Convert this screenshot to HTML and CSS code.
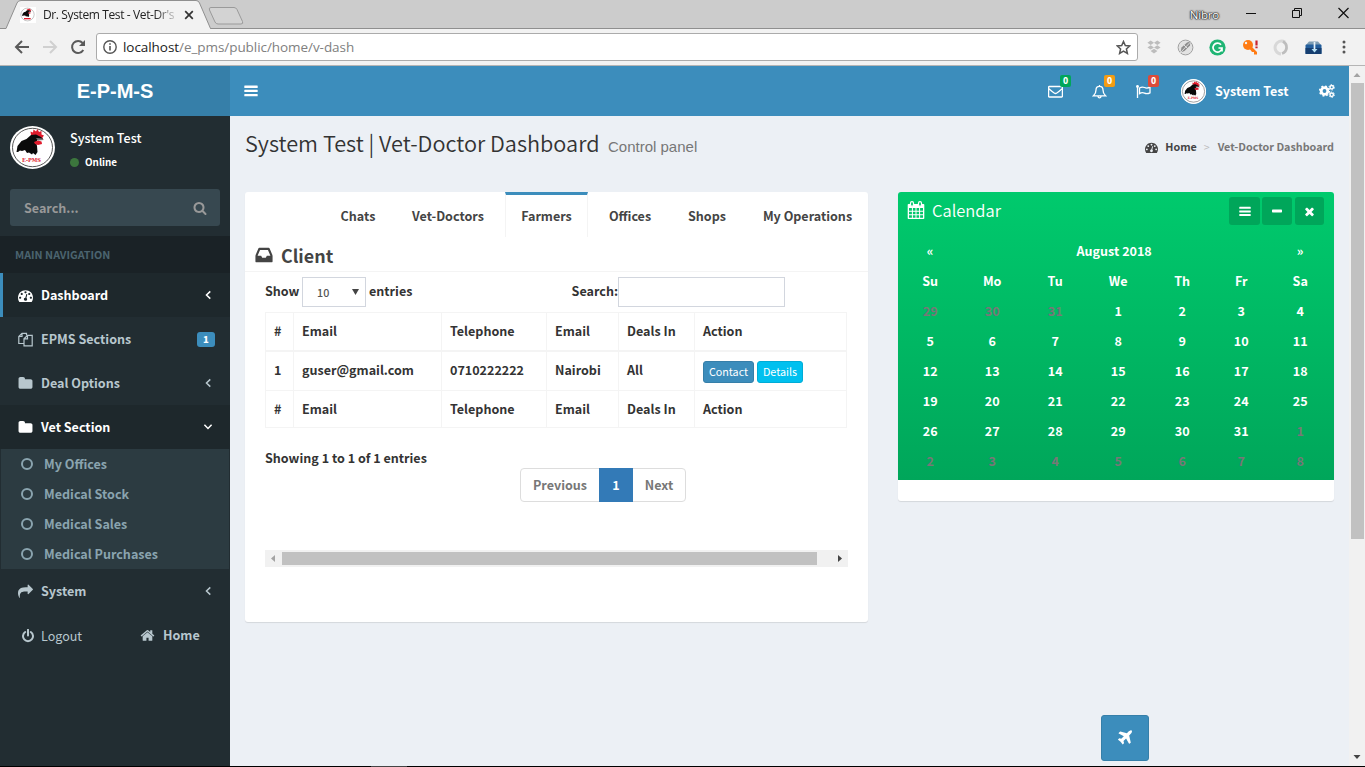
FILE: index.html
```html
<!DOCTYPE html>
<html lang="en">
<head>
<meta charset="utf-8">
<title>Dr. System Test - Vet-Dr's Dashboard</title>
<link rel="stylesheet" href="styles.css">
</head>
<body>
<svg class="defs" aria-hidden="true">
  <symbol id="rooster" viewBox="0 0 45 43">
    <ellipse cx="22.500" cy="21.500" rx="22.500" ry="21.500" fill="#fff"/>
    <ellipse cx="22.500" cy="21.500" rx="20" ry="19.200" fill="none" stroke="#444" stroke-width=".9"/>
    <path d="M21 9l-.5-3.500 2.500 1 .5-3 2.500 2 1.500-2.500 1.500 3 2.500-1 0 3.500 2.500 1-1.500 2 .5 2.500-3-1-3-2z" fill="#e01b2c"/>
    <path d="M6.500 26l1-6 4-5 5-2 4.500-4 5-.5 5 2.500 2 2-5 .5-2 2.500 1 4 .5 6-2 3-2.500-2-1 1.500-3-2-2 .5-2-3-3 1-2-.5-2 1.500z" fill="#0a0a0a"/>
    <path d="M24 16l4-1.500 3.500 1 .5 2.500-4 1-3-1z" fill="#e01b2c"/>
    <path d="M26 12l6 .5 2 1.500-6 .5z" fill="#777"/>
  </symbol>
  <symbol id="dash" viewBox="0 0 1792 1792"><path d="M384 1152q0-53-37.500-90.500t-90.500-37.500-90.500 37.500-37.500 90.500 37.500 90.500 90.500 37.500 90.500-37.500 37.500-90.500zm192-448q0-53-37.500-90.500t-90.500-37.500-90.500 37.500-37.500 90.500 37.500 90.500 90.500 37.500 90.500-37.500 37.500-90.500zm428 481l101-382q6-26-7.500-48.500t-38.500-29.500-48 6.500-30 39.500l-101 382q-60 5-107 43.500t-63 98.500q-20 77 20 146t117 89 146-20 89-117q16-60-6-117t-72-91zm660-33q0-53-37.500-90.500t-90.500-37.500-90.500 37.500-37.500 90.500 37.500 90.500 90.500 37.500 90.500-37.500 37.500-90.500zm-640-640q0-53-37.500-90.500t-90.500-37.500-90.500 37.500-37.500 90.500 37.500 90.500 90.500 37.500 90.500-37.500 37.500-90.500zm448 192q0-53-37.500-90.500t-90.500-37.500-90.500 37.500-37.500 90.500 37.500 90.500 90.500 37.500 90.500-37.500 37.500-90.500zm320 448q0 261-141 483-19 29-54 29h-1402q-35 0-54-29-141-221-141-483 0-182 71-348t191-286 286-191 348-71 348 71 286 191 191 286 71 348z"/></symbol>
  <symbol id="folder" viewBox="0 0 1792 1792"><path d="M1728 608v704q0 92-66 158t-158 66h-1216q-92 0-158-66t-66-158v-960q0-92 66-158t158-66h320q92 0 158 66t66 158v32h672q92 0 158 66t66 158z"/></symbol>
  <symbol id="share" viewBox="0 0 1792 1792"><path d="M1792 640q0 26-19 45l-512 512q-19 19-45 19t-45-19-19-45v-256h-224q-98 0-175.500 6t-154 21.500-133 42.500-105.500 69.500-80 101-48.500 138.500-17.500 181q0 55 5 123 0 6 2.500 23.500t2.500 26.500q0 15-8.500 25t-23.500 10q-16 0-28-17-7-9-13-22t-13.500-30-10.500-24q-127-285-127-451 0-199 53-333 162-403 875-403h224v-256q0-26 19-45t45-19 45 19l512 512q19 19 19 45z"/></symbol>
  <symbol id="home" viewBox="0 0 1792 1792"><path d="M1472 992v480q0 26-19 45t-45 19h-384v-384h-256v384h-384q-26 0-45-19t-19-45v-480q0-1 .5-3t.5-3l575-474 575 474q1 2 1 6zm223-69l-62 74q-8 9-21 11h-3q-13 0-21-7l-692-577-692 577q-12 8-24 7-13-2-21-11l-62-74q-8-10-7-23.500t11-21.500l719-599q32-26 76-26t76 26l244 204v-195q0-14 9-23t23-9h192q14 0 23 9t9 23v408l219 182q10 8 11 21.500t-7 23.500z"/></symbol>
  <symbol id="search" viewBox="0 0 1792 1792"><path d="M1216 832q0-185-131.500-316.500t-316.500-131.500-316.500 131.500-131.500 316.500 131.500 316.500 316.500 131.500 316.500-131.500 131.500-316.500zm512 832q0 52-38 90t-90 38q-54 0-90-38l-343-342q-179 124-399 124-143 0-273.500-55.500t-225-150-150-225-55.500-273.500 55.500-273.500 150-225 225-150 273.500-55.500 273.500 55.500 225 150 150 225 55.500 273.500q0 220-124 399l343 343q37 37 37 90z"/></symbol>
  <symbol id="times" viewBox="0 0 1792 1792"><path d="M1490 1322q0 40-28 68l-136 136q-28 28-68 28t-68-28l-294-294-294 294q-28 28-68 28t-68-28l-136-136q-28-28-28-68t28-68l294-294-294-294q-28-28-28-68t28-68l136-136q28-28 68-28t68 28l294 294 294-294q28-28 68-28t68 28l136 136q28 28 28 68t-28 68l-294 294 294 294q28 28 28 68z"/></symbol>
  <symbol id="plane" viewBox="0 0 1792 1792"><path d="M1568 160q44 52 12 148t-108 172l-161 161 160 696q5 19-12 33l-128 96q-7 6-19 6-4 0-7-1-15-3-21-16l-279-508-259 259 53 194q5 17-8 31l-96 96q-9 9-23 9h-2q-15-2-24-13l-189-252-252-189q-11-7-13-23-1-13 9-25l96-97q9-9 23-9 6 0 8 1l194 53 259-259-508-279q-14-8-17-24-2-16 9-27l128-128q14-13 30-8l665 159 160-160q76-76 172-108t148 12z"/></symbol>
  <symbol id="inbox" viewBox="0 0 1792 1792"><path d="M1151 960h316q-1-3-2.500-8t-2.500-8l-212-496h-708l-212 496q-1 2-2.500 8t-2.500 8h316l95 192h320zm513 30v482q0 26-19 45t-45 19h-1408q-26 0-45-19t-19-45v-482q0-62 25-123l238-552q10-25 36.500-42t52.500-17h832q26 0 52.500 17t36.500 42l238 552q25 61 25 123z"/></symbol>
  <symbol id="bars" viewBox="0 0 14 12"><path d="M.8.500h12.400q.5 0 .5.500v1.400q0 .5-.5.500H.8q-.5 0-.5-.5V1q0-.5.5-.5zM.8 4.700h12.400q.5 0 .5.500v1.400q0 .5-.5.500H.8q-.5 0-.5-.5V5.200q0-.5.5-.5zM.8 8.900h12.400q.5 0 .5.500v1.400q0 .5-.5.500H.8q-.5 0-.5-.5V9.400q0-.5.500-.5z"/></symbol>
  <symbol id="left" viewBox="0 0 8 10"><path d="M6.300 1.400L2.500 5l3.800 3.600" fill="none" stroke="currentColor" stroke-width="1.500"/></symbol>
</svg>

<div class="browser">
  <div class="tabstrip">
    <svg class="tab-shape" width="250" height="29" viewBox="0 0 250 29">
      <path d="M0 28.500H6L17 3q1-2.500 4-2.500H196q2.500 0 3.500 2.500L210.500 28.500V29H0z" fill="#f2f2f2"/>
      <path d="M0 28.500H6L17 3q1-2.500 4-2.500H196q2.500 0 3.500 2.500L210.500 28.500H250" fill="none" stroke="#8f8f8f"/>
      <path d="M211 7.500H234q2 0 3 2l5.500 12q1 2.500-1.500 2.500H218q-2 0-3-2L209.500 10q-1-2.500 1.500-2.500z" fill="#d3d3d3" stroke="#9a9a9a"/>
    </svg>
    <div class="tab">
      <span class="favicon"><svg width="15" height="15" viewBox="0 0 45 45"><use href="#rooster" width="45" height="45"/><path d="M12 35h20" stroke="#e01b2c" stroke-width="4"/></svg></span>
      <span class="tab-title">Dr. System Test - Vet-Dr's</span>
      <svg class="tab-close" width="10" height="10" viewBox="0 0 10 10"><path d="M1.200 1.200l7.600 7.600M8.800 1.200L1.200 8.800" stroke="#333" stroke-width="1.700"/></svg>
    </div>
    <div class="window-buttons">
      <span class="user">Nibro</span>
      <svg width="10" height="12" viewBox="0 0 10 12"><path d="M0 6.500h10" stroke="#111"/></svg>
      <svg width="10" height="12" viewBox="0 0 10 12"><path d="M.5 3.500h7v7h-7zM2.500 3.500v-2h7v7h-2" fill="none" stroke="#111"/></svg>
      <svg width="11" height="12" viewBox="0 0 11 12"><path d="M.5 1l10 10M10.500 1l-10 10" stroke="#111" stroke-width="1.200"/></svg>
    </div>
  </div>
  <div class="toolbar">
    <div class="nav-buttons">
      <svg width="16" height="16" viewBox="0 0 16 16"><path d="M15 8H2.500M8 2L2 8l6 6" fill="none" stroke="#5a5a5a" stroke-width="2"/></svg>
      <svg width="16" height="16" viewBox="0 0 16 16"><path d="M1 8h12.500M8 2l6 6-6 6" fill="none" stroke="#d0d0d0" stroke-width="2"/></svg>
      <svg width="16" height="16" viewBox="0 0 16 16"><path d="M13.300 11A6 6 0 1 1 12.600 4" fill="none" stroke="#5a5a5a" stroke-width="2"/><path d="M15 1v6H9z" fill="#5a5a5a"/></svg>
    </div>
    <div class="omnibox">
      <svg width="14" height="14" viewBox="0 0 14 14"><circle cx="7" cy="7" r="6.200" fill="none" stroke="#555" stroke-width="1.400"/><path d="M7 6v4.500M7 3.300v1.500" stroke="#555" stroke-width="1.600"/></svg>
      <span class="url"><b>localhost</b>/e_pms/public/home/v-dash</span>
      <svg class="star" width="15" height="15" viewBox="0 0 15 15"><path d="M7.500 1.500l1.800 4.100 4.400.4-3.300 3 1 4.400-3.900-2.300-3.900 2.300 1-4.400-3.300-3 4.400-.4z" fill="none" stroke="#555" stroke-width="1.500"/></svg>
    </div>
    <div class="extensions">
      <svg width="14" height="14" viewBox="0 0 14 14" fill="#bdbdbd"><path d="M3.700.5L7 2.700 3.700 4.900.4 2.700zM10.300.5l3.300 2.200-3.300 2.200L7 2.700zM3.700 5.200L7 7.400 3.700 9.600.4 7.400zM10.300 5.200l3.300 2.200-3.300 2.200L7 7.400zM7 8.800l3.400 2.200L7 13.500 3.600 11z"/></svg>
      <svg width="17" height="17" viewBox="0 0 17 17"><circle cx="8.500" cy="8.500" r="7.400" fill="#e2e2e2" stroke="#a2a2a2"/><path d="M3.500 13.500l1-5L10 3.500l3.500-1-.5 4L7.500 12z" fill="#8d8d8d"/><path d="M3 14L13.500 3M7 6l4 4" stroke="#ddd"/></svg>
      <svg width="17" height="17" viewBox="0 0 17 17"><circle cx="8.500" cy="8.500" r="8.100" fill="#1fb574"/><path d="M12 5.700A4.500 4.500 0 1 0 13 9H9.500M13 9v3.500" fill="none" stroke="#fff" stroke-width="1.700"/></svg>
      <svg width="17" height="17" viewBox="0 0 17 17"><circle cx="7" cy="6" r="5" fill="#ff7b13"/><circle cx="5" cy="4" r="1.200" fill="#f2f2f2"/><path d="M9 6l7 7v2.500h-3V13h-2l-3-4z" fill="#ff7b13"/><path d="M15.500 1.500v5M15.500 7.500v1.800" stroke="#c8252d" stroke-width="2.200"/></svg>
      <svg width="17" height="17" viewBox="0 0 17 17" fill="none"><path d="M8 15a6.500 6.500 0 1 1 4-12" stroke="#d8d8d8" stroke-width="3"/><path d="M10 2.500a6.500 6.500 0 0 1-1 12" stroke="#bdbdbd" stroke-width="2.800"/></svg>
      <svg width="17" height="17" viewBox="0 0 17 17"><path d="M1 6L4 2.500h9L16 6z" fill="#7e9db3"/><rect x=".5" y="5.500" width="16" height="9.500" rx="1" fill="#235e9c"/><rect x=".5" y="9" width="16" height="6" fill="#153e70"/><path d="M9.500 3v8" stroke="#e8f4fa" stroke-width="1.700"/><path d="M6.500 10h6l-3 3.500z" fill="#b4e0f5"/></svg>
      <svg width="4" height="14" viewBox="0 0 4 14" fill="#555"><circle cx="2" cy="2" r="1.500"/><circle cx="2" cy="7" r="1.500"/><circle cx="2" cy="12" r="1.500"/></svg>
    </div>
  </div>
</div>

<div class="viewport">
  <div class="page">
    <aside class="sidebar">
      <a class="logo">E-P-M-S</a>
      <div class="user-panel">
        <svg width="45" height="43" viewBox="0 0 45 43"><use href="#rooster" width="45" height="43"/><text class="brand" x="21.500" y="35.800" textLength="19" lengthAdjust="spacingAndGlyphs">E-PMS</text></svg>
        <div class="user-info"><p class="who">System Test</p><p class="status"><i></i>Online</p></div>
      </div>
      <div class="side-search"><span>Search...</span><svg width="14" height="14"><use href="#search"/></svg></div>
      <div class="nav-title">MAIN NAVIGATION</div>
      <nav>
        <a class="item current"><svg class="ic" width="15" height="15"><use href="#dash"/></svg><span>Dashboard</span><svg class="arrow" width="8" height="10"><use href="#left"/></svg></a>
        <a class="item"><svg class="ic" width="15" height="15" viewBox="0 0 15 15"><path d="M5.500 11.500H.8V4.500L4 1.300h4.500v2M4 1.300v3.200H.8M9.500 3.300h4.700v10.500H6V6.800zM9.500 3.300v3.500H6" fill="none" stroke="currentColor" stroke-width="1.200"/></svg><span>EPMS Sections</span><b class="count">1</b></a>
        <a class="item"><svg class="ic" width="15" height="15"><use href="#folder"/></svg><span>Deal Options</span><svg class="arrow" width="8" height="10"><use href="#left"/></svg></a>
        <a class="item open"><svg class="ic" width="15" height="15"><use href="#folder"/></svg><span>Vet Section</span><svg class="arrow down" width="8" height="10"><use href="#left"/></svg></a>
        <div class="submenu">
          <a><i></i>My Offices</a>
          <a><i></i>Medical Stock</a>
          <a><i></i>Medical Sales</a>
          <a><i></i>Medical Purchases</a>
        </div>
        <a class="item"><svg class="ic" width="15" height="15"><use href="#share"/></svg><span>System</span><svg class="arrow" width="8" height="10"><use href="#left"/></svg></a>
      </nav>
      <div class="side-footer">
        <svg width="14" height="14" viewBox="0 0 14 14"><path d="M4.200 3a5 5 0 1 0 5.600 0M7 .8v5.700" fill="none" stroke="currentColor" stroke-width="2" stroke-linecap="round"/></svg>
        <span class="logout">Logout</span>
        <svg class="house" width="15" height="15"><use href="#home"/></svg>
        <b>Home</b>
      </div>
    </aside>

    <div class="content">
      <header class="navbar">
        <svg class="toggle" width="14" height="12"><use href="#bars"/></svg>
        <div class="alerts">
          <span><svg width="15" height="15" viewBox="0 0 15 15"><path d="M1.200 2.500h12.600q.6 0 .6.600v9.300q0 .6-.6.600H1.200q-.6 0-.6-.6V3.100q0-.6.6-.6zM.6 4.500Q4.500 8 6.500 9.200q1 .6 2 0 2-1.200 5.900-4.700" fill="none" stroke="#fff" stroke-width="1.300"/></svg><b class="green">0</b></span>
          <span><svg width="15" height="15" viewBox="0 0 15 15"><path d="M7.500 1v1.200M1.500 11.800Q4 9.500 4 6q0-3.600 3.500-3.600T11 6q0 3.500 2.500 5.800zM6 12.300q.2 1.500 1.500 1.500T9 12.300" fill="none" stroke="#fff" stroke-width="1.300"/></svg><b class="orange">0</b></span>
          <span><svg width="15" height="15" viewBox="0 0 15 15"><path d="M1.500 2v12M3.500 4Q6 2.500 8.500 3.500q2.500 1.200 5.500-.3v5.600q-3 1.500-5.500.3-2.500-1-5 .5z" fill="none" stroke="#fff" stroke-width="1.300"/><circle cx="1.500" cy="2.500" r="1.400" fill="#fff"/></svg><b class="red">0</b></span>
        </div>
        <svg class="avatar" width="25" height="25" viewBox="0 0 45 45"><circle cx="22.500" cy="22.500" r="22.500" fill="#fff"/><use href="#rooster" width="45" height="45"/><text class="brand" x="21.500" y="36.800" textLength="19" lengthAdjust="spacingAndGlyphs">E-PMS</text></svg>
        <b class="name">System Test</b>
        <svg class="cogs" width="16" height="14" viewBox="0 0 16 14" fill="none" stroke="#fff"><circle cx="5.500" cy="7" r="3.300" stroke-width="2.800"/><circle cx="5.500" cy="7" r="4.900" stroke-width="1.500" stroke-dasharray="1.900 1.950"/><circle cx="12.700" cy="3.300" r="1.700" stroke-width="1.500"/><circle cx="12.700" cy="3.300" r="2.700" stroke-width="1" stroke-dasharray="1.400 1.420"/><circle cx="12.700" cy="10.700" r="1.700" stroke-width="1.500"/><circle cx="12.700" cy="10.700" r="2.700" stroke-width="1" stroke-dasharray="1.400 1.420"/></svg>
      </header>

      <section class="heading">
        <h1>System Test | Vet-Doctor Dashboard</h1><small>Control panel</small>
        <div class="crumbs"><svg width="13" height="13"><use href="#dash"/></svg><span class="here">Home</span><i>&gt;</i><span>Vet-Doctor Dashboard</span></div>
      </section>

      <section class="boards">
        <div class="card">
          <div class="tabs"><a>Chats</a><a>Vet-Doctors</a><a class="active">Farmers</a><a>Offices</a><a>Shops</a><a>My Operations</a></div>
          <div class="card-title"><svg width="20" height="20"><use href="#inbox"/></svg><h2>Client</h2></div>
          <div class="card-body">
            <div class="filters">
              <span>Show</span><div class="select">10<svg width="7" height="6" viewBox="0 0 7 6"><path d="M0 0h7L3.500 6z" fill="#444"/></svg></div><span>entries</span>
              <label>Search:</label><input type="text" aria-label="Search">
            </div>
            <table>
              <colgroup><col class="c1"><col class="c2"><col class="c3"><col class="c4"><col class="c5"><col class="c6"></colgroup>
              <thead><tr><th>#</th><th>Email</th><th>Telephone</th><th>Email</th><th>Deals In</th><th>Action</th></tr></thead>
              <tbody><tr><td>1</td><td>guser@gmail.com</td><td>0710222222</td><td>Nairobi</td><td>All</td><td class="act"><div class="actions"><a class="contact">Contact</a><a class="details">Details</a></div></td></tr></tbody>
              <tfoot><tr><th>#</th><th>Email</th><th>Telephone</th><th>Email</th><th>Deals In</th><th>Action</th></tr></tfoot>
            </table>
            <div class="summary">Showing 1 to 1 of 1 entries</div>
            <div class="pager"><a>Previous</a><a class="on">1</a><a>Next</a></div>
            <div class="hscroll"><svg width="17" height="17" viewBox="0 0 17 17"><path d="M10 5v7L6 8.500z" fill="#a3a3a3"/></svg><i></i><svg width="17" height="17" viewBox="0 0 17 17"><path d="M7 5v7l4-3.500z" fill="#444"/></svg></div>
          </div>
        </div>

        <div class="calendar">
          <div class="cal-green">
            <div class="cal-head">
              <svg width="18" height="19" viewBox="0 0 18 19"><path d="M1.500 3h15q.8 0 .8.800v13.500q0 .8-.8.800h-15q-.8 0-.8-.8V3.800q0-.8.8-.8zM2 7v2.800h2.900V7zm3.900 0v2.800h2.600V7zm3.600 0v2.800h2.600V7zm3.600 0v2.800H16V7zM2 10.700v2.600h2.900v-2.600zm3.900 0v2.600h2.600v-2.600zm3.600 0v2.600h2.600v-2.600zm3.600 0v2.600H16v-2.600zM2 14.200v2.600h2.900v-2.600zm3.900 0v2.600h2.600v-2.600zm3.600 0v2.600h2.600v-2.600zm3.600 0v2.600H16v-2.600z" fill="#fff" fill-rule="evenodd"/><rect x="3.500" y=".7" width="3" height="4.500" rx="1.500" fill="#00ca6d" stroke="#fff" stroke-width="1.200"/><rect x="11.500" y=".7" width="3" height="4.500" rx="1.500" fill="#00ca6d" stroke="#fff" stroke-width="1.200"/></svg>
              <h3>Calendar</h3>
              <a class="b1"><svg width="12" height="11"><use href="#bars"/></svg></a>
              <a class="b2"><svg width="10" height="4" viewBox="0 0 10 4"><rect width="10" height="3" y=".5" rx=".7"/></svg></a>
              <a class="b3"><svg width="13" height="13"><use href="#times"/></svg></a>
            </div>
            <div class="cal-grid">
              <span>«</span><span class="month">August 2018</span><span>»</span>
              <span>Su</span><span>Mo</span><span>Tu</span><span>We</span><span>Th</span><span>Fr</span><span>Sa</span>
              <span class="off">29</span><span class="off">30</span><span class="off">31</span><span>1</span><span>2</span><span>3</span><span>4</span>
              <span>5</span><span>6</span><span>7</span><span>8</span><span>9</span><span>10</span><span>11</span>
              <span>12</span><span>13</span><span>14</span><span>15</span><span>16</span><span>17</span><span>18</span>
              <span>19</span><span>20</span><span>21</span><span>22</span><span>23</span><span>24</span><span>25</span>
              <span>26</span><span>27</span><span>28</span><span>29</span><span>30</span><span>31</span><span class="off">1</span>
              <span class="off">2</span><span class="off">3</span><span class="off">4</span><span class="off">5</span><span class="off">6</span><span class="off">7</span><span class="off">8</span>
            </div>
          </div>
        </div>
      </section>
      <a class="fly"><svg width="18" height="18"><use href="#plane"/></svg></a>
    </div>
  </div>
  <div class="vscroll"><svg width="16" height="17" viewBox="0 0 16 17"><path d="M4.500 11h7L8 7z" fill="#a3a3a3"/></svg><i></i><svg class="end" width="16" height="17" viewBox="0 0 16 17"><path d="M4.500 6h7L8 10z" fill="#444"/></svg></div>
</div>
<div class="taskbar"><i></i></div>
</body>
</html>
```

FILE: styles.css
```css
* { box-sizing: border-box; }
body {
  margin: 0; width: 1365px; height: 767px; overflow: hidden;
  display: flex; flex-direction: column;
  font: 600 12.55px/20px "Noto Sans CJK SC", "Noto Sans", sans-serif; color: #333;
}
p, h1, h2, h3 { margin: 0; }
svg { display: block; flex: none; }
svg:not([fill]) { fill: currentColor; }
i { font-style: normal; }
.defs { position: absolute; width: 0; height: 0; }
.brand { font: 700 5.5px "DejaVu Serif", serif; fill: #e01b2c; text-anchor: middle; }

/* Browser frame */
.browser { height: 66px; flex: none; background: #f2f2f2; border-bottom: 1px solid #b5b5b5; font-family: "Open Sans", sans-serif; font-weight: 400; }
.tabstrip { height: 29px; background: linear-gradient(#ccc 28px, #8f8f8f 28px); display: flex; position: relative; }
.tab-shape { position: absolute; left: 0; top: 0; }
.tab { position: relative; width: 250px; display: flex; align-items: center; padding: 1px 0 0 20px; height: 29px; }
.favicon { width: 16px; height: 16px; background: #fff; }
.tab-title { margin-left: 7px; width: 133px; white-space: nowrap; overflow: hidden; color: #222; font-size: 12px; letter-spacing: -.38px; -webkit-mask-image: linear-gradient(90deg, #000 112px, transparent 137px); }
.tab-close { margin-left: 8px; }
.window-buttons { margin-left: auto; display: flex; align-items: center; padding: 0 16px 3px 0; }
.window-buttons svg:nth-of-type(1) { margin-left: 27px; }
.window-buttons svg:nth-of-type(2) { margin-left: 36px; }
.window-buttons svg:nth-of-type(3) { margin-left: 36px; }
.user { font-size: 11.5px; color: #fff; letter-spacing: -.2px; text-shadow: 0 0 1px #111, 0 0 1px #222, 0 0 2px #222, 0 0 2px #444; padding-top: 3px; }
.toolbar { height: 36px; display: flex; align-items: center; padding-left: 14px; }
.nav-buttons { display: flex; gap: 12px; width: 82px; }
.omnibox { width: 1042px; height: 28px; border: 1px solid #ababab; border-radius: 3px; background: #fff; display: flex; align-items: center; padding: 0 6px; }
.url { margin-left: 6px; font-size: 13.5px; letter-spacing: -.06px; color: #808080; white-space: nowrap; }
.url b { color: #222; font-weight: 400; }
.star { margin-left: auto; }
.extensions { display: flex; align-items: center; gap: 15px; padding-left: 9px; }
.extensions svg:nth-child(2) { margin-left: 1px; }
.extensions svg:last-child { margin-left: 5px; }

/* Application shell */
.viewport { flex: 1; display: flex; min-height: 0; }
.page { flex: 1; display: flex; background: #ecf0f5; }
.sidebar { width: 230px; background: #222d32; color: #b8c7ce; }
.logo { display: block; height: 50px; background: #367fa9; color: #fff; text-align: center; font: bold 20px/50px "Liberation Sans", Arial, sans-serif; }
.user-panel { height: 63px; padding: 10px; display: flex; color: #fff; }
.user-info { padding: 2px 0 0 15px; }
.who { font-weight: 500; letter-spacing: .02px; }
.status { display: flex; align-items: center; font-size: 9.85px; line-height: 20px; margin-top: 4px; }
.status i { width: 9px; height: 9px; border-radius: 50%; background: #3c763d; margin-right: 6px; }
.side-search { margin: 10px 10px 10px; height: 37px; border-radius: 3px; background: #374850; color: #999; display: flex; align-items: center; justify-content: space-between; padding: 0 13px 0 14px; }
.nav-title { height: 37px; background: #1a2226; color: #4b646f; font-size: 10.75px; line-height: 37px; padding-left: 15px; }
.item { height: 44px; display: flex; align-items: center; padding: 0 15px 0 18px; border-left: 0; }
.item span { margin-left: 8px; }
.item .arrow { margin-left: auto; margin-right: 3px; }
.item.current, .item.open { background: #1e282c; color: #fff; }
.item.current { border-left: 3px solid #3c8dbc; padding-left: 15px; }
.arrow.down { transform: rotate(-90deg); }
.count { margin-left: auto; width: 18px; height: 15px; border-radius: 3px; background: #3c8dbc; color: #fff; font-size: 9.5px; line-height: 14px; text-align: center; }
.submenu { margin: 0 1px; background: #2c3b41; color: #8aa4af; }
.submenu a { height: 30px; display: flex; align-items: center; padding-left: 20px; }
.submenu i { width: 12px; height: 12px; border: 2px solid #8aa4af; border-radius: 50%; margin-right: 11px; }
.side-footer { height: 46px; display: flex; align-items: center; padding-left: 21px; }
.logout { margin-left: 6px; width: 99px; font-weight: 400; }
.house { margin-bottom: 1px; }
.side-footer b { margin: 0 0 2px 8px; font-weight: 600; }

.content { flex: 1; display: flex; flex-direction: column; }
.navbar { height: 50px; background: #3c8dbc; color: #fff; display: flex; align-items: center; padding: 0 14px; }
.alerts { margin-left: auto; display: flex; gap: 29px; }
.alerts span { position: relative; }
.alerts b { position: absolute; left: 12px; top: -9px; width: 11px; height: 12px; border-radius: 2px; font-size: 8.5px; line-height: 11px; text-align: center; }
.green { background: #00a65a; } .orange { background: #f39c12; } .red { background: #dd4b39; }
.avatar { margin-left: 30px; }
.name { margin-left: 9px; width: 104px; font-weight: 600; }

.heading { height: 76px; padding: 0 15px; display: flex; align-items: flex-start; }
.heading h1 { font-size: 21.7px; font-weight: 350; line-height: 30px; padding-top: 12px; width: 363px; white-space: nowrap; }
.heading small { font: 15px/30px "Liberation Sans", Arial, sans-serif; color: #777; padding-top: 16px; }
.crumbs { margin-left: auto; padding-top: 21px; display: flex; align-items: center; font-size: 10.75px; color: #777; }
.crumbs svg { color: #444; }
.crumbs .here { color: #444; margin-left: 7px; }
.crumbs i { color: #bbb; padding: 0 8px 0 7px; font-weight: 400; font-size: 10.5px; }
.boards { display: flex; gap: 30px; padding: 0 15px; align-items: flex-start; }

/* Client card */
.card { width: 623px; height: 430px; background: #fff; border-radius: 3px; box-shadow: 0 1px 1px rgba(0,0,0,.1); }
.tabs { display: grid; grid-template-columns: 66px 104px 83px 74px 70px 121px; gap: 5px; justify-content: end; height: 44px; color: #444; }
.tabs a { text-align: center; line-height: 42px; padding-top: 3px; white-space: nowrap; }
.tabs .active { border: solid #f4f4f4; border-width: 3px 1px 0; border-top-color: #3c8dbc; padding-top: 0; }
.card-title { height: 36px; border-bottom: 1px solid #f4f4f4; display: flex; align-items: center; padding: 3px 0 0 9px; color: #444; }
.card-title h2 { margin-left: 7px; font-size: 17.9px; font-weight: 600; }
.card-body { padding: 5px 20px 0; }
.filters { display: flex; height: 30px; align-items: center; margin-bottom: 5px; }
.filters span, .filters label { padding-bottom: 2px; }
.filters span:first-child { width: 37px; }
.select { width: 64px; height: 30px; border: 1px solid #d2d6de; margin-right: 3px; display: flex; align-items: center; justify-content: space-between; padding: 1px 6px 0 14px; font-size: 10.75px; color: #555; font-weight: 500; }
.select svg { margin-bottom: 2px; }
.filters label { margin-left: auto; }
.filters input { width: 167px; height: 30px; border: 1px solid #d2d6de; margin-right: 63px; padding: 0; }
table { width: 581px; table-layout: fixed; border-collapse: collapse; }
.c1 { width: 28px; } .c2 { width: 148px; } .c3 { width: 105px; } .c4 { width: 72px; } .c5 { width: 76px; } .c6 { width: 152px; }
th, td { border: 1px solid #f4f4f4; padding: 0 8px; text-align: left; font-weight: 600; height: 37px; white-space: nowrap; }
thead th { border-bottom-width: 2px; height: 38px; }
tbody td { height: 40px; padding: 8px 8px 0; vertical-align: top; }
tbody td.act { padding-top: 9px; }
.actions { display: flex; gap: 3px; }
.actions a { height: 22px; border: 1px solid #367fa9; border-radius: 3px; background: #3c8dbc; color: #fff; font-size: 10.75px; line-height: 20px; font-weight: 400; text-align: center; width: 51px; }
.actions .details { background: #00c0ef; border-color: #00acd6; width: 46px; }
.summary { margin-top: 20px; height: 20px; }
.pager { display: flex; width: 166px; height: 34px; margin-left: 255px; color: #777; border: 1px solid #ddd; border-radius: 4px; line-height: 32px; text-align: center; }
.pager a:first-child { width: 78px; }
.pager a:last-child { width: 52px; }
.pager .on { width: 34px; margin: -1px 0; line-height: 34px; background: #337ab7; color: #fff; }
.hscroll { margin-top: 48px; width: 583px; height: 17px; background: #f1f1f1; display: flex; align-items: center; }
.hscroll i { width: 535px; height: 13px; background: #c1c1c1; margin-right: 14px; }

/* Calendar */
.calendar { width: 436px; height: 309px; background: #fff; border-radius: 3px; overflow: hidden; box-shadow: 0 1px 1px rgba(0,0,0,.1); color: #fff; }
.cal-green { height: 288px; background: linear-gradient(#00ca6d, #00a65a); }
.cal-head { height: 44px; display: flex; padding: 5px 10px 0 9px; }
.cal-head > svg { margin-top: 4px; }
.cal-head h3 { margin: 3px auto 0 7px; font-size: 16.5px; font-weight: 350; line-height: 20px; }
.cal-head a { height: 28px; background: #00a65a; border-radius: 3px; display: flex; align-items: center; justify-content: center; }
.b1 { width: 31px; margin-right: 2px; } .b2 { width: 30px; margin-right: 3px; } .b3 { width: 29px; }
.cal-grid { display: grid; grid-template-columns: 62px 62px 64px 62px 66px 52px 66px; grid-auto-rows: 30px; padding-left: 1.2px; text-align: center; line-height: 29px; }
.month { grid-column: span 5; }
.cal-grid .off { color: #777; }

.fly { margin: auto 200px 5px auto; width: 48px; height: 46px; background: #3c8dbc; border: 1px solid #367fa9; border-radius: 3px; color: #fff; display: flex; align-items: center; justify-content: center; }
.vscroll { width: 16px; background: #f1f1f1; display: flex; flex-direction: column; align-items: center; }
.vscroll i { width: 13px; height: 456px; background: #c1c1c1; margin-left: 1px; }
.vscroll .end { margin-top: auto; }
.taskbar { height: 1px; background: #000; padding-left: 371px; }
.taskbar i { display: block; width: 36px; height: 1px; background: #444; }
```
